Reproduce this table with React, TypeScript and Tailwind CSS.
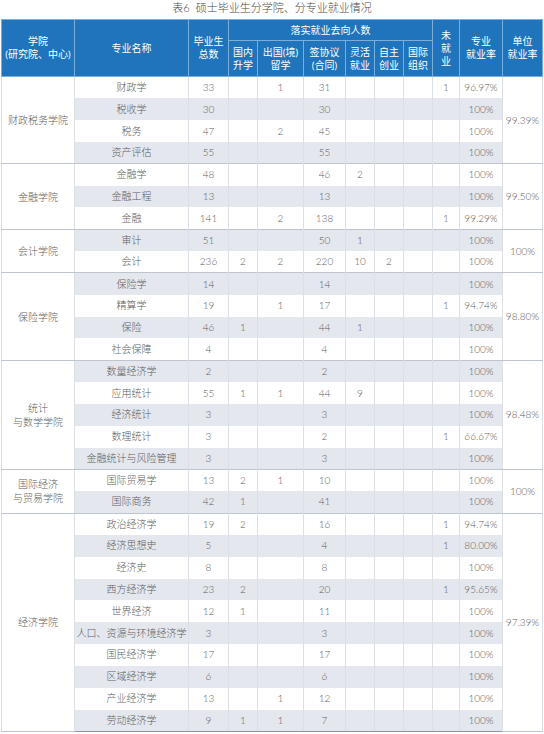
import React from "react";

type Row = [string, string, string, string, string, string, string, string, string, string];

type Group = {
  college: string[];
  unit: string;
  rows: Row[];
};

const groups: Group[] = [
  {
    college: ["财政税务学院"],
    unit: "99.39%",
    rows: [
      ["财政学", "33", "", "1", "31", "", "", "", "1", "96.97%"],
      ["税收学", "30", "", "", "30", "", "", "", "", "100%"],
      ["税务", "47", "", "2", "45", "", "", "", "", "100%"],
      ["资产评估", "55", "", "", "55", "", "", "", "", "100%"],
    ],
  },
  {
    college: ["金融学院"],
    unit: "99.50%",
    rows: [
      ["金融学", "48", "", "", "46", "2", "", "", "", "100%"],
      ["金融工程", "13", "", "", "13", "", "", "", "", "100%"],
      ["金融", "141", "", "2", "138", "", "", "", "1", "99.29%"],
    ],
  },
  {
    college: ["会计学院"],
    unit: "100%",
    rows: [
      ["审计", "51", "", "", "50", "1", "", "", "", "100%"],
      ["会计", "236", "2", "2", "220", "10", "2", "", "", "100%"],
    ],
  },
  {
    college: ["保险学院"],
    unit: "98.80%",
    rows: [
      ["保险学", "14", "", "", "14", "", "", "", "", "100%"],
      ["精算学", "19", "", "1", "17", "", "", "", "1", "94.74%"],
      ["保险", "46", "1", "", "44", "1", "", "", "", "100%"],
      ["社会保障", "4", "", "", "4", "", "", "", "", "100%"],
    ],
  },
  {
    college: ["统计", "与数学学院"],
    unit: "98.48%",
    rows: [
      ["数量经济学", "2", "", "", "2", "", "", "", "", "100%"],
      ["应用统计", "55", "1", "1", "44", "9", "", "", "", "100%"],
      ["经济统计", "3", "", "", "3", "", "", "", "", "100%"],
      ["数理统计", "3", "", "", "2", "", "", "", "1", "66.67%"],
      ["金融统计与风险管理", "3", "", "", "3", "", "", "", "", "100%"],
    ],
  },
  {
    college: ["国际经济", "与贸易学院"],
    unit: "100%",
    rows: [
      ["国际贸易学", "13", "2", "1", "10", "", "", "", "", "100%"],
      ["国际商务", "42", "1", "", "41", "", "", "", "", "100%"],
    ],
  },
  {
    college: ["经济学院"],
    unit: "97.39%",
    rows: [
      ["政治经济学", "19", "2", "", "16", "", "", "", "1", "94.74%"],
      ["经济思想史", "5", "", "", "4", "", "", "", "1", "80.00%"],
      ["经济史", "8", "", "", "8", "", "", "", "", "100%"],
      ["西方经济学", "23", "2", "", "20", "", "", "", "1", "95.65%"],
      ["世界经济", "12", "1", "", "11", "", "", "", "", "100%"],
      ["人口、资源与环境经济学", "3", "", "", "3", "", "", "", "", "100%"],
      ["国民经济学", "17", "", "", "17", "", "", "", "", "100%"],
      ["区域经济学", "6", "", "", "6", "", "", "", "", "100%"],
      ["产业经济学", "13", "", "1", "12", "", "", "", "", "100%"],
      ["劳动经济学", "9", "1", "1", "7", "", "", "", "", "100%"],
    ],
  },
];

const widths = [73, 114, 40, 29, 46, 42, 29, 29, 29, 27, 43, 40];

const th =
  "bg-[#1f74bb] text-white font-normal text-[10px] leading-[13px] border border-[#7aaedb] text-center align-middle p-0";

export default function App() {
  let idx = 0;
  return (
    <div className="w-[544px] h-[734px] bg-white overflow-hidden font-light font-['Lato','Noto_Sans_CJK_SC',sans-serif]">
      <div className="h-[19px] text-center text-[11px] leading-[15px] text-[#4a4a4a]">
        表6&nbsp;&nbsp;硕士毕业生分学院、分专业就业情况
      </div>
      <table className="ml-px w-[541px] table-fixed border-collapse">
        <colgroup>
          {widths.map((w, i) => (
            <col key={i} style={{ width: w }} />
          ))}
        </colgroup>
        <thead>
          <tr className="h-[21px]">
            <th rowSpan={2} className={th}>
              学院
              <br />
              (研究院、中心)
            </th>
            <th rowSpan={2} className={th}>
              专业名称
            </th>
            <th rowSpan={2} className={th}>
              毕业生
              <br />
              总数
            </th>
            <th colSpan={6} className={th}>
              落实就业去向人数
            </th>
            <th rowSpan={2} className={th}>
              未<br />就<br />业
            </th>
            <th rowSpan={2} className={th}>
              专业
              <br />
              就业率
            </th>
            <th rowSpan={2} className={th}>
              单位
              <br />
              就业率
            </th>
          </tr>
          <tr className="h-[36px]">
            <th className={th}>
              国内
              <br />
              升学
            </th>
            <th className={th}>
              出国(境)
              <br />
              留学
            </th>
            <th className={th}>
              签协议
              <br />
              (合同)
            </th>
            <th className={th}>
              灵活
              <br />
              就业
            </th>
            <th className={th}>
              自主
              <br />
              创业
            </th>
            <th className={th}>
              国际
              <br />
              组织
            </th>
          </tr>
        </thead>
        <tbody className="text-[10px] leading-[13px] text-[#606060]">
          {groups.map((g, gi) =>
            g.rows.map((r, ri) => {
              const shaded = idx++ % 2 === 1;
              const first = ri === 0;
              const cell = `p-0 text-center align-middle border-x border-[#dcdfe5] whitespace-nowrap ${
                shaded ? "bg-[#e4e7ee]" : "bg-white"
              } ${first ? "border-t border-t-[#bfc5cf]" : ""} ${
                gi === groups.length - 1 && ri === g.rows.length - 1 ? "border-b border-b-[#8f959e]" : ""
              }`;
              return (
                <tr key={`${gi}-${ri}`} className="h-[21.83px]">
                  {first && (
                    <td
                      rowSpan={g.rows.length}
                      className="p-0 text-center align-middle bg-white border border-[#dcdfe5] border-t-[#bfc5cf] border-b-[#bfc5cf] leading-[14px]"
                    >
                      {g.college.map((l, li) => (
                        <div key={li}>{l}</div>
                      ))}
                    </td>
                  )}
                  {r.map((v, vi) => (
                    <td key={vi} className={cell}>
                      {v}
                    </td>
                  ))}
                  {first && (
                    <td
                      rowSpan={g.rows.length}
                      className="p-0 text-center align-middle bg-white border border-[#dcdfe5] border-t-[#bfc5cf] border-b-[#bfc5cf]"
                    >
                      {g.unit}
                    </td>
                  )}
                </tr>
              );
            })
          )}
        </tbody>
      </table>
    </div>
  );
}
